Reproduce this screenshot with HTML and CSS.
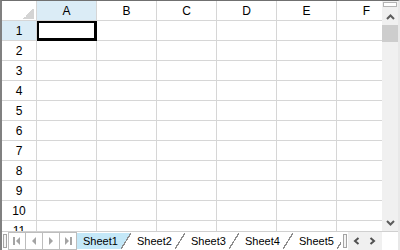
FILE: index.html
```html
<!DOCTYPE html>
<html lang="en">
<head>
    <meta charset="UTF-8">
    <title>Spreadsheet</title>
    <link rel="stylesheet" href="styles.css">
</head>
<body>
    <div class="book">
        <div class="main">
            <div class="grid" id="grid"></div>
            <div class="vscroll">
                <div class="vsplit"></div>
                <div class="vbtn">
                    <svg width="9" height="6" viewBox="0 0 9 6"><polyline points="1,5 4.5,1.5 8,5" fill="none" stroke="#5c5c5c" stroke-width="2"/></svg>
                </div>
                <div class="thumb"></div>
                <div class="track"></div>
                <div class="vbtn">
                    <svg width="9" height="6" viewBox="0 0 9 6"><polyline points="1,1 4.5,4.5 8,1" fill="none" stroke="#5c5c5c" stroke-width="2"/></svg>
                </div>
            </div>
        </div>
        <div class="bottom">
            <div class="hsplit"><div class="grip"></div></div>
            <div class="nav">
                <div class="nav-btn"><svg width="16" height="14" viewBox="0 0 16 14"><rect x="4" y="3" width="2" height="8" fill="#a4a4a4"/><polygon points="11,3 11,11 7,7" fill="#a4a4a4"/></svg></div>
                <div class="nav-btn"><svg width="16" height="14" viewBox="0 0 16 14"><polygon points="10,3 10,11 6,7" fill="#a4a4a4"/></svg></div>
                <div class="nav-btn"><svg width="16" height="14" viewBox="0 0 16 14"><polygon points="6,3 6,11 10,7" fill="#a4a4a4"/></svg></div>
                <div class="nav-btn"><svg width="16" height="14" viewBox="0 0 16 14"><polygon points="5,3 5,11 9,7" fill="#a4a4a4"/><rect x="10" y="3" width="2" height="8" fill="#a4a4a4"/></svg></div>
            </div>
            <div class="tabs">
                <div class="tab tab-active">Sheet1</div>
                <div class="tab">Sheet2</div>
                <div class="tab">Sheet3</div>
                <div class="tab">Sheet4</div>
                <div class="tab">Sheet5</div>
            </div>
            <div class="hsplit hsplit-right"><div class="grip"></div></div>
            <div class="hscroll">
                <svg width="7" height="8" viewBox="0 0 7 8"><polyline points="5.5,1 2,4 5.5,7" fill="none" stroke="#505050" stroke-width="2"/></svg>
                <svg width="7" height="8" viewBox="0 0 7 8"><polyline points="1.5,1 5,4 1.5,7" fill="none" stroke="#505050" stroke-width="2"/></svg>
            </div>
            <div class="corner-box"></div>
        </div>
    </div>

    <script>
        // Build the header row and the visible rows
        const grid = document.getElementById("grid");
        const cols = ["A", "B", "C", "D", "E", "F"];

        function addCell(cls, text) {
            const div = document.createElement("div");
            div.className = cls;
            if (text) div.textContent = text;
            grid.appendChild(div);
            return div;
        }

        addCell("corner");
        cols.forEach((c, i) => addCell(i === 0 ? "head active" : "head", c));
        for (let r = 1; r <= 11; r++) {
            addCell(r === 1 ? "head active" : "head", String(r));
            for (let c = 0; c < cols.length; c++) {
                addCell(r === 1 && c === 0 ? "cell sel" : "cell");
            }
        }
    </script>
</body>
</html>
```

FILE: styles.css
```css
body {
    margin: 0;
    font-family: "Liberation Sans", Arial, sans-serif;
    font-size: 12px;
    color: #000;
}
.book {
    width: 400px;
    height: 250px;
    box-sizing: border-box;
    border-top: 1px solid #707070;
    border-left: 2px solid #808080;
    border-right: 2px solid #e8e8e8;
    display: flex;
    flex-direction: column;
    background: #fff;
}
.main {
    display: flex;
    height: 230px;
}
.grid {
    flex: 1;
    overflow: hidden;
    display: grid;
    grid-template-columns: 35px repeat(6, 60px);
    grid-auto-rows: 20px;
    align-content: start;
}
.grid > div {
    box-sizing: border-box;
    border-right: 1px solid #d6d6d6;
    border-bottom: 1px solid #d6d6d6;
}
.head {
    display: flex;
    align-items: center;
    justify-content: center;
}
.active {
    background: #dbecf6;
}
.corner {
    display: flex;
    align-items: flex-end;
    justify-content: flex-end;
    padding: 0 2px 1px 0;
}
.corner::after {
    content: "";
    width: 11px;
    height: 11px;
    background: linear-gradient(to bottom right, transparent 50%, #d4d4d4 50%);
}
.grid > .sel {
    border-color: #000;
    box-shadow: inset 0 0 0 2px #000;
}
.vscroll {
    width: 16px;
    background: #f0f0f0;
    display: flex;
    flex-direction: column;
    align-items: center;
}
.vsplit {
    width: 14px;
    height: 5px;
    box-sizing: border-box;
    border: 1px solid #b4b4b4;
    background: #fff;
    margin: 1px 0;
}
.vbtn {
    width: 16px;
    height: 17px;
    display: flex;
    align-items: center;
    justify-content: center;
}
.thumb {
    width: 16px;
    height: 17px;
    background: #cdcdcd;
}
.track {
    flex: 1;
}
.bottom {
    flex: 1;
    display: flex;
    align-items: center;
    border-top: 1px solid #d0d0d0;
}
.hsplit {
    width: 6px;
    height: 100%;
    display: flex;
    align-items: center;
    justify-content: center;
}
.hsplit-right {
    width: 7px;
    justify-content: flex-end;
    padding-right: 1px;
    box-sizing: border-box;
}
.grip {
    width: 4px;
    height: 14px;
    box-sizing: border-box;
    border: 1px solid #a4a4a4;
    background: #f4f4f4;
}
.nav {
    display: flex;
    height: 16px;
    border: 1px solid #bdbdbd;
}
.nav-btn {
    width: 16px;
    display: flex;
    align-items: center;
    justify-content: center;
    border-right: 1px solid #bdbdbd;
}
.nav-btn:last-child {
    border-right: none;
}
.tabs {
    width: 264px;
    height: 16px;
    display: flex;
    overflow: hidden;
}
.tab {
    flex: none;
    width: 54px;
    height: 16px;
    box-sizing: border-box;
    padding-left: 6px;
    display: flex;
    align-items: center;
    font-size: 11px;
    background: linear-gradient(to top left, transparent calc(50% - 0.6px), #8c8c8c calc(50% - 0.6px), #8c8c8c calc(50% + 0.6px), transparent calc(50% + 0.6px)) right top / 10px 100% no-repeat;
}
.tab-active {
    background:
        linear-gradient(to top left, transparent calc(50% - 0.6px), #8c8c8c calc(50% - 0.6px), #8c8c8c calc(50% + 0.6px), transparent calc(50% + 0.6px)) right top / 10px 100% no-repeat,
        linear-gradient(to top left, transparent 50%, #c4e8f8 50%) right top / 10px 100% no-repeat,
        linear-gradient(#c4e8f8, #c4e8f8) left top / calc(100% - 10px) 100% no-repeat;
}
.hscroll {
    width: 34px;
    height: 100%;
    box-sizing: border-box;
    padding-left: 5px;
    display: flex;
    align-items: center;
    gap: 9px;
    background: #f0f0f0;
}
.corner-box {
    width: 16px;
    height: 100%;
    background: #fff;
}
```
